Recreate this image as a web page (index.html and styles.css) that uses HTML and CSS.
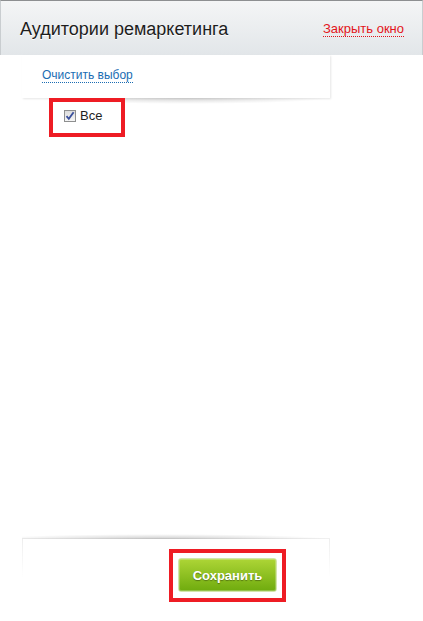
FILE: index.html
```html
<!DOCTYPE html>
<html lang="ru">
<head>
    <meta charset="UTF-8">
    <meta name="viewport" content="width=device-width, initial-scale=1.0">
    <title>Аудитории ремаркетинга</title>
    <link rel="stylesheet" href="styles.css">
</head>
<body>
<div class="dialog">
    <div class="dialog-head">
        <h3 class="dialog-title">Аудитории ремаркетинга</h3>
        <a class="close-link" href="#">Закрыть окно</a>
    </div>

    <div class="toolbar">
        <a class="clear-link" href="#">Очистить выбор</a>
    </div>

    <div class="list">
        <div class="mark">
            <label class="check">
                <span class="check-box">
                    <svg width="10" height="10" viewBox="0 0 10 10">
                        <path d="M1.5 5.2 L3.8 7.8 L8.6 1.2" fill="none" stroke="#3a4f9c" stroke-width="1.8"/>
                    </svg>
                </span>
                <span class="check-text">Все</span>
            </label>
        </div>
    </div>

    <div class="footer">
        <div class="mark mark-btn">
            <button class="save-btn" type="button">Сохранить</button>
        </div>
    </div>
</div>
</body>
</html>
```

FILE: styles.css
```css
* {
    padding: 0;
    margin: 0;
    box-sizing: border-box;
}
body {
    background: #ffffff;
    font-family: "Liberation Sans", Arial, sans-serif;
}
.dialog {
    width: 423px;
    height: 621px;
    display: flex;
    flex-direction: column;
    background: #ffffff;
}

/* header */
.dialog-head {
    height: 55px;
    display: flex;
    align-items: center;
    justify-content: space-between;
    padding: 2px 18px 0 19px;
    background: linear-gradient(#f4f5f6, #e2e6e9);
    border-top: 1px solid #8d8f91;
    border-left: 1px solid #c9cdd0;
    border-right: 1px solid #c9cdd0;
}
.dialog-title {
    font-size: 18px;
    font-weight: normal;
    color: #1d1d1d;
    text-shadow: 0 1px 0 #ffffff;
}
.close-link {
    font-size: 13px;
    color: #e3141b;
    text-decoration: none;
    border-bottom: 1px dotted #e3141b;
    line-height: 14px;
}

/* toolbar under header */
.toolbar {
    position: relative;
    width: 308px;
    height: 43px;
    margin-left: 22px;
    padding: 10px 0 0 20px;
    background: #ffffff;
    box-shadow: 1px 1px 2px rgba(0, 0, 0, 0.1);
}
.toolbar::after {
    content: "";
    position: absolute;
    left: 20px;
    right: 0;
    bottom: -6px;
    height: 6px;
    background: radial-gradient(ellipse at 50% 0, rgba(0, 0, 0, 0.16), rgba(0, 0, 0, 0) 70%);
}
.clear-link {
    font-size: 12px;
    color: #1b6db3;
    text-decoration: none;
    border-bottom: 1px dotted #1b6db3;
    line-height: 14px;
}

/* list */
.list {
    flex: 1;
    padding-left: 49px;
}
.mark {
    position: relative;
    display: inline-block;
    border: 4px solid #ee1c24;
    z-index: 1;
}
.list .mark {
    width: 76px;
    height: 39px;
    padding: 6px 0 0 11px;
}
.check {
    display: flex;
    align-items: center;
    gap: 4px;
    cursor: pointer;
}
.check-box {
    width: 12px;
    height: 12px;
    display: flex;
    align-items: center;
    justify-content: center;
    border: 1px solid #8e8f8f;
    background: linear-gradient(#dcdcdc, #f6f6f6);
}
.check-text {
    font-size: 13px;
    color: #1f1f1f;
    padding-top: 0;
}

/* footer */
.footer {
    position: relative;
    width: 308px;
    margin: 0 0 19px 22px;
    padding: 10px 0 0 147px;
    border-top: 1px solid #f0f0f0;
    background:
        linear-gradient(#eeeeee, #ffffff) no-repeat 0 0 / 1px 38px,
        linear-gradient(#eeeeee, #ffffff) no-repeat 100% 0 / 1px 38px;
}
.footer::before {
    content: "";
    position: absolute;
    left: 0;
    right: 0;
    top: -5px;
    height: 5px;
    background: radial-gradient(ellipse at 45% 100%, rgba(0, 0, 0, 0.2), rgba(0, 0, 0, 0) 70%);
}
.mark-btn {
    width: 117px;
    height: 53px;
    padding: 5px 0 0 5px;
}
.save-btn {
    width: 99px;
    height: 34px;
    border: 1px solid #d3e5ab;
    border-radius: 3px;
    background: linear-gradient(#add536, #6fab0e);
    box-shadow: inset 0 0 0 1px rgba(255, 255, 255, 0.25);
    font-family: "Liberation Sans", Arial, sans-serif;
    font-size: 13px;
    font-weight: bold;
    color: #ffffff;
    text-shadow: 0 1px 1px rgba(0, 0, 0, 0.35);
    cursor: pointer;
}
```
